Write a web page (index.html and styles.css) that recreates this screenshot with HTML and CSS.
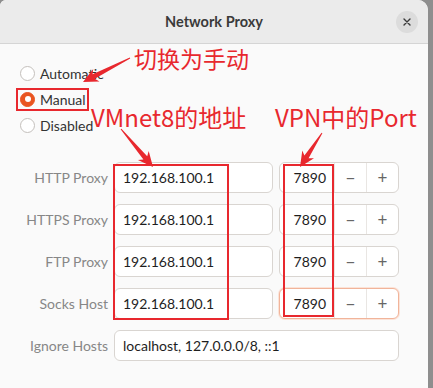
FILE: index.html
```html
<!DOCTYPE html>
<html lang="en">
<head>
    <meta charset="UTF-8">
    <title>Network Proxy</title>
    <link rel="stylesheet" href="styles.css">
</head>
<body>
    <div class="window">
        <header class="titlebar">
            <span></span>
            <span class="title">Network Proxy</span>
            <span class="close">
                <svg width="8" height="8" viewBox="0 0 8 8"><path d="M1 1L7 7M7 1L1 7" stroke="#3a3a3a" stroke-width="1.4" stroke-linecap="round"/></svg>
            </span>
        </header>

        <main class="content">
            <ul class="modes">
                <li><span class="radio"></span>Automatic</li>
                <li class="checked"><span class="radio"></span>Manual</li>
                <li><span class="radio"></span>Disabled</li>
            </ul>

            <div class="form">
                <label>HTTP Proxy</label>
                <div class="entry">192.168.100.1</div>
                <div class="spin"><span class="port">7890</span><span class="btn">&minus;</span><span class="btn">+</span></div>

                <label>HTTPS Proxy</label>
                <div class="entry">192.168.100.1</div>
                <div class="spin"><span class="port">7890</span><span class="btn">&minus;</span><span class="btn">+</span></div>

                <label>FTP Proxy</label>
                <div class="entry">192.168.100.1</div>
                <div class="spin"><span class="port">7890</span><span class="btn">&minus;</span><span class="btn">+</span></div>

                <label>Socks Host</label>
                <div class="entry">192.168.100.1</div>
                <div class="spin focus"><span class="port">7890</span><span class="btn">&minus;</span><span class="btn">+</span></div>

                <label>Ignore Hosts</label>
                <div class="entry wide">localhost, 127.0.0.0/8, ::1</div>
            </div>
        </main>

        <!-- annotation layer -->
        <svg class="marks" width="428" height="388" viewBox="0 0 428 388">
            <g fill="none" stroke="#e8282e" stroke-width="2">
                <rect x="17" y="89" width="71" height="21"/>
                <rect x="114" y="165" width="114" height="154"/>
                <rect x="284" y="165" width="49" height="151"/>
            </g>
            <g fill="#e8282e">
                <polygon points="129.8,57.6 92.6,74.3 93.2,68.9 83,82 99.5,81.4 94.8,78.7 130.2,58.4"/>
                <polygon points="120.6,129.3 143.4,159.4 137.9,160 153,167 148.7,151 147.2,156.2 121.4,128.7"/>
                <polygon points="321.6,132.7 304.4,155.5 302.3,150.6 300,167 314,158.2 308.6,158.3 322.4,133.3"/>
            </g>
        </svg>
        <span class="note note-mode">切换为手动</span>
        <span class="note note-host">VMnet8的地址</span>
        <span class="note note-port">VPN中的Port</span>
    </div>
</body>
</html>
```

FILE: styles.css
```css
body {
    margin: 0;
    background: #8e8e8e;
    font-family: "Lato", "Noto Sans", sans-serif;
    font-size: 14px;
}
.window {
    position: relative;
    width: 428px;
    height: 388px;
    background: #fafafa;
    border-radius: 6px 10px 0 0;
    overflow: hidden;
}
.titlebar {
    height: 43px;
    display: grid;
    grid-template-columns: 1fr auto 1fr;
    align-items: center;
    background: #ebebeb;
    border-bottom: 1px solid #d5d5d5;
}
.title {
    font-weight: 700;
    color: #3a3a3a;
    font-size: 14.5px;
}
.close {
    justify-self: end;
    margin-right: 10px;
    width: 22px;
    height: 22px;
    border-radius: 50%;
    background: #dcdcdc;
    display: flex;
    align-items: center;
    justify-content: center;
}

.content {
    padding-top: 16px;
}
.modes {
    list-style: none;
    margin: 0;
    padding: 0 0 0 20px;
}
.modes li {
    height: 26px;
    display: flex;
    align-items: center;
    gap: 5px;
    color: #333;
}
.radio {
    width: 13px;
    height: 13px;
    border-radius: 50%;
    border: 1px solid #c4c0bc;
    background: #fff;
    display: flex;
    align-items: center;
    justify-content: center;
}
.checked .radio {
    background: #e95420;
    border-color: #e95420;
}
.checked .radio::after {
    content: "";
    width: 6px;
    height: 6px;
    border-radius: 50%;
    background: #fff;
}

.form {
    margin-top: 24px;
    display: grid;
    grid-template-columns: 108px 159px 120px;
    grid-auto-rows: 31px;
    column-gap: 6px;
    row-gap: 11px;
}
.form label {
    align-self: center;
    text-align: right;
    color: #878787;
}
.entry {
    display: flex;
    align-items: center;
    padding-left: 8px;
    background: #fff;
    border: 1px solid #d9d5d1;
    border-radius: 6px;
    color: #1e1e1e;
}
.entry.wide {
    grid-column: 2 / 4;
}
.spin {
    display: flex;
    background: #fff;
    border: 1px solid #d9d5d1;
    border-radius: 6px;
    color: #1e1e1e;
}
.spin.focus {
    border-color: #f1b49a;
    box-shadow: 0 0 0 1px #fbe3d8;
}
.port {
    width: 46px;
    padding-right: 8px;
    display: flex;
    align-items: center;
    justify-content: flex-end;
}
.btn {
    flex: 1;
    display: flex;
    align-items: center;
    justify-content: center;
    border-left: 1px solid #e9e6e3;
    color: #666;
    font-size: 17px;
}

.marks {
    position: absolute;
    left: 0;
    top: 0;
    pointer-events: none;
}
.note {
    position: absolute;
    color: #e8282e;
    font-family: "Noto Sans CJK SC", sans-serif;
    font-size: 24px;
    line-height: 1;
    white-space: nowrap;
}
.note-mode {
    left: 134px;
    top: 47px;
    font-size: 23px;
}
.note-host {
    left: 91px;
    top: 105px;
}
.note-port {
    left: 275px;
    top: 105px;
}
```
